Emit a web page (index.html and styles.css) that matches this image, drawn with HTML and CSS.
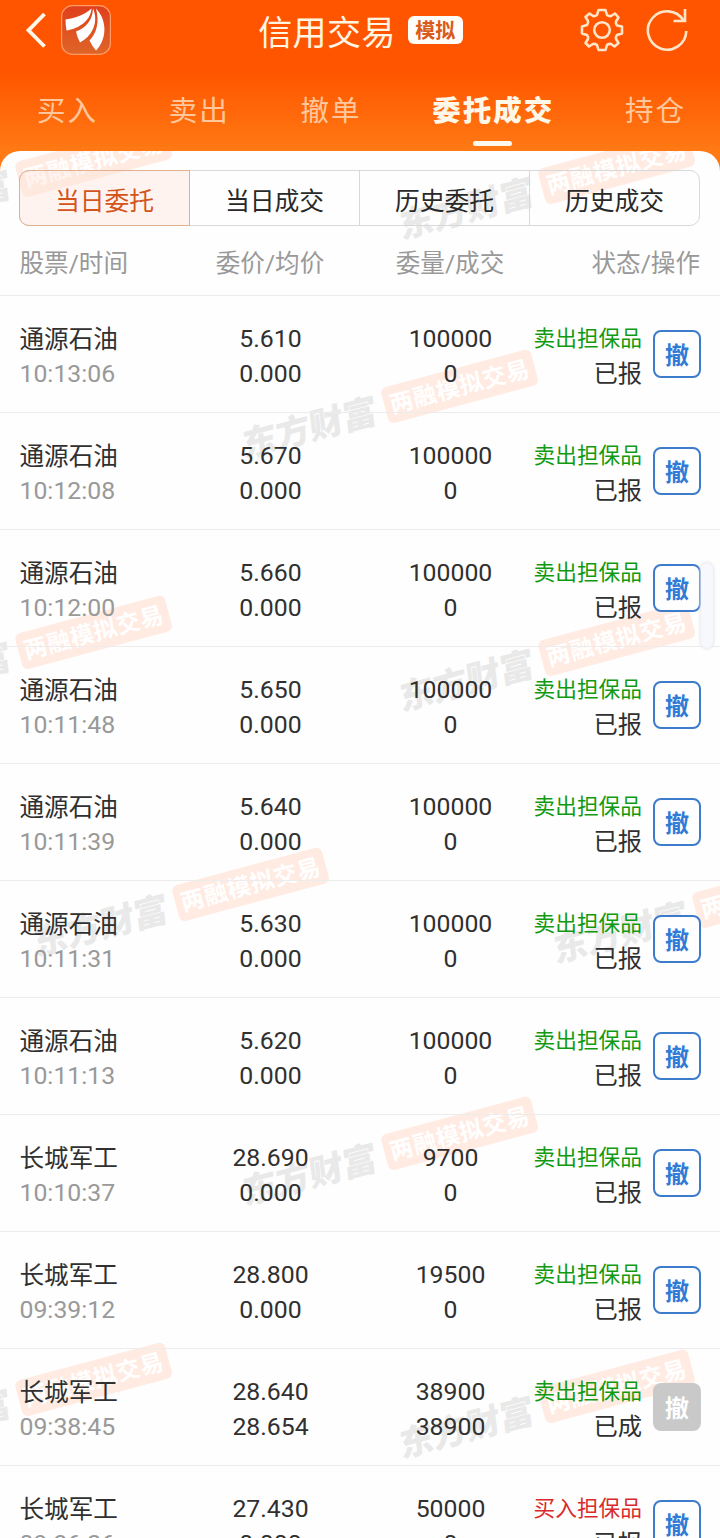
FILE: index.html
```html
<!DOCTYPE html>
<html lang="zh-CN">
<head>
<meta charset="utf-8">
<title>信用交易</title>
<link rel="stylesheet" href="styles.css">
</head>
<body>
<div class="app">
  <header class="header">
    <div class="titlebar">
      <div class="side left">
        <svg class="back" width="24" height="40" viewBox="0 0 24 40"><path d="M20.500 4 4.500 20.300 20.500 36.500" fill="none" stroke="#fff8ea" stroke-width="3.800"/></svg>
        <svg class="logo" width="50" height="50" viewBox="0 0 50 50">
          <defs><linearGradient id="lg" x1="0" y1="0" x2="0" y2="1"><stop offset="0" stop-color="#df3f1d"/><stop offset="1" stop-color="#df6527"/></linearGradient></defs>
          <rect x=".6" y=".6" width="48.800" height="48.800" rx="11" fill="url(#lg)" stroke="#ff9b63" stroke-width="1.200"/>
          <path d="M30.500 3.500C24 10 13 13.500 4.500 14.500Q4.500 20 5.500 25.500C14 24.500 29.500 18 30.500 3.500Z" fill="#fff"/>
          <path d="M32 3.500C31.500 15 25 23 15 26.500Q16 32 19 37.500C30 32 38.500 18 32 3.500Z" fill="#fff"/>
          <path d="M35 3.500C38.500 17 36 27.500 28.500 35.500Q31 41 35 45.500C45.500 35 47 16 35 3.500Z" fill="#fff"/>
        </svg>
      </div>
      <h1 class="title">信用交易</h1>
      <span class="tag">模拟</span>
      <div class="side right">
        <svg width="44" height="44" viewBox="0 0 44 44" fill="none" stroke="#ffe5c8" stroke-width="2.600" stroke-linejoin="round">
          <path d="M18.500 2H25.500L27 7Q29 8.500 31 8L35 5.500L38.500 9.500L36 13.500Q35.500 15.500 37 17.500L42 18.500V25.500L37 27Q35.500 29 36 31L38.500 35L34.500 38.500L31 36Q29 35.500 27 37L25.500 42H18.500L17 37Q15 35.500 13 36L9 38.500L5.500 35L8 31Q8.500 29 7 27L2 25.500V18.500L7 17Q8.500 15 8 13L5.500 9L9.500 5.500L13 8Q15 8.500 17 7Z"/>
          <circle cx="22" cy="22" r="7.800"/>
        </svg>
        <svg width="44" height="44" viewBox="0 0 44 44" fill="none" stroke="#ffe5c8" stroke-width="2.600">
          <path d="M41.300 23A19.200 19.200 0 1 1 38.500 12.500"/><path d="M40 1V13H28.500"/>
        </svg>
      </div>
    </div>
    <nav class="tabs">
      <a class="tab">买入</a><a class="tab">卖出</a><a class="tab">撤单</a><a class="tab active">委托成交</a><a class="tab">持仓</a>
    </nav>
  </header>
  <main class="panel">
    <div class="marks">
      <div class="mark m1"><i>东方财富</i><b>两融模拟交易</b></div>
      <div class="mark m2"><i>东方财富</i><b>两融模拟交易</b></div>
      <div class="mark m3"><i>东方财富</i><b>两融模拟交易</b></div>
      <div class="mark m4"><i>东方财富</i><b>两融模拟交易</b></div>
      <div class="mark m5"><i>东方财富</i><b>两融模拟交易</b></div>
      <div class="mark m6"><i>东方财富</i><b>两融模拟交易</b></div>
      <div class="mark m7"><i>东方财富</i><b>两融模拟交易</b></div>
      <div class="mark m8"><i>东方财富</i><b>两融模拟交易</b></div>
      <div class="mark m9"><i>东方财富</i><b>两融模拟交易</b></div>
      <div class="mark m10"><i>东方财富</i><b>两融模拟交易</b></div>
    </div>
    <div class="content">
      <div class="segments"><a class="seg on">当日委托</a><a class="seg">当日成交</a><a class="seg">历史委托</a><a class="seg">历史成交</a></div>
      <div class="columns"><span>股票/时间</span><span>委价/均价</span><span>委量/成交</span><span>状态/操作</span></div>
      <div class="row"><div class="stock"><p>通源石油</p><p>10:13:06</p></div><div class="num"><p>5.610</p><p>0.000</p></div><div class="num"><p>100000</p><p>0</p></div><div class="state"><div><p class="sell">卖出担保品</p><p>已报</p></div><span class="btn">撤</span></div></div>
      <div class="row"><div class="stock"><p>通源石油</p><p>10:12:08</p></div><div class="num"><p>5.670</p><p>0.000</p></div><div class="num"><p>100000</p><p>0</p></div><div class="state"><div><p class="sell">卖出担保品</p><p>已报</p></div><span class="btn">撤</span></div></div>
      <div class="row"><div class="stock"><p>通源石油</p><p>10:12:00</p></div><div class="num"><p>5.660</p><p>0.000</p></div><div class="num"><p>100000</p><p>0</p></div><div class="state"><div><p class="sell">卖出担保品</p><p>已报</p></div><span class="btn">撤</span></div></div>
      <div class="row"><div class="stock"><p>通源石油</p><p>10:11:48</p></div><div class="num"><p>5.650</p><p>0.000</p></div><div class="num"><p>100000</p><p>0</p></div><div class="state"><div><p class="sell">卖出担保品</p><p>已报</p></div><span class="btn">撤</span></div></div>
      <div class="row"><div class="stock"><p>通源石油</p><p>10:11:39</p></div><div class="num"><p>5.640</p><p>0.000</p></div><div class="num"><p>100000</p><p>0</p></div><div class="state"><div><p class="sell">卖出担保品</p><p>已报</p></div><span class="btn">撤</span></div></div>
      <div class="row"><div class="stock"><p>通源石油</p><p>10:11:31</p></div><div class="num"><p>5.630</p><p>0.000</p></div><div class="num"><p>100000</p><p>0</p></div><div class="state"><div><p class="sell">卖出担保品</p><p>已报</p></div><span class="btn">撤</span></div></div>
      <div class="row"><div class="stock"><p>通源石油</p><p>10:11:13</p></div><div class="num"><p>5.620</p><p>0.000</p></div><div class="num"><p>100000</p><p>0</p></div><div class="state"><div><p class="sell">卖出担保品</p><p>已报</p></div><span class="btn">撤</span></div></div>
      <div class="row"><div class="stock"><p>长城军工</p><p>10:10:37</p></div><div class="num"><p>28.690</p><p>0.000</p></div><div class="num"><p>9700</p><p>0</p></div><div class="state"><div><p class="sell">卖出担保品</p><p>已报</p></div><span class="btn">撤</span></div></div>
      <div class="row"><div class="stock"><p>长城军工</p><p>09:39:12</p></div><div class="num"><p>28.800</p><p>0.000</p></div><div class="num"><p>19500</p><p>0</p></div><div class="state"><div><p class="sell">卖出担保品</p><p>已报</p></div><span class="btn">撤</span></div></div>
      <div class="row"><div class="stock"><p>长城军工</p><p>09:38:45</p></div><div class="num"><p>28.640</p><p>28.654</p></div><div class="num"><p>38900</p><p>38900</p></div><div class="state"><div><p class="sell">卖出担保品</p><p>已成</p></div><span class="btn off">撤</span></div></div>
      <div class="row"><div class="stock"><p>长城军工</p><p>09:36:26</p></div><div class="num"><p>27.430</p><p>0.000</p></div><div class="num"><p>50000</p><p>0</p></div><div class="state"><div><p class="buy">买入担保品</p><p>已报</p></div><span class="btn">撤</span></div></div>
    </div>
  </main>
  <div class="handle"></div>
</div>
</body>
</html>
```

FILE: styles.css
```css
* { box-sizing: border-box; }
body { margin: 0; font-family: Roboto, "Noto Sans CJK SC", sans-serif; color: #303030; }
p, h1 { margin: 0; }
.app { position: relative; width: 720px; height: 1538px; overflow: hidden; background: linear-gradient(#ff5500 0, #ff5500 72px, #ff7a14 152px, #ff7a14 190px); }
.header { height: 151px; }
.titlebar { height: 60px; display: flex; align-items: center; justify-content: center; padding: 0 31px 0 24px; }
.side { flex: 1 1 0; display: flex; align-items: center; }
.side svg { display: block; }
.left { gap: 13px; margin-right: 8px; }
.right { justify-content: flex-end; gap: 21px; }
.title { font-size: 34px; line-height: 62px; font-weight: 400; color: #fff5e0; letter-spacing: .4px; padding-top: 6px; }
.tag { width: 55px; height: 28px; margin-left: 12px; border-radius: 6px; background: #fffdf8; color: #d95b1b; font-size: 20px; line-height: 30px; font-weight: 700; text-align: center; }
.tabs { height: 91px; display: flex; justify-content: space-between; padding: 33px 34px 0 37px; }
.tab { position: relative; height: 56px; font-size: 28.500px; line-height: 38px; letter-spacing: 2px; color: #ffc79b; }
.active { color: #fff8e8; font-weight: 900; }
.active::after { content: ""; position: absolute; left: 41px; top: 48px; width: 39px; height: 5px; border-radius: 3px; background: #fff8ec; }
.panel { position: relative; height: 1387px; border-radius: 20px 20px 0 0; background: #fefefe; overflow: hidden; }
.content { position: relative; padding-top: 19px; }

/* Watermark stamps scattered behind the list */
.marks { position: absolute; inset: 0; }
.mark { position: absolute; width: 310px; height: 36px; display: flex; align-items: center; justify-content: space-between; transform-origin: 232px 18px; transform: rotate(-15deg); white-space: nowrap; }
.mark i { margin-left: 8px; padding-top: 3px; font-size: 34.500px; line-height: 36px; font-weight: 900; font-style: normal; color: #e9e9e9; transform: skewX(-8deg); }
.mark b { width: 155px; height: 37px; border-radius: 6px; background: #ffebe2; color: #fff; font-size: 23.500px; line-height: 38px; font-weight: 700; letter-spacing: .5px; text-align: center; }
.m1 { left: -139px; top: -9px; }
.m2 { left: 384px; top: -2px; }
.m3 { left: 227px; top: 217px; }
.m4 { left: -139px; top: 463px; }
.m5 { left: 384px; top: 470px; }
.m6 { left: 18px; top: 715px; }
.m7 { left: 538px; top: 722px; }
.m8 { left: 227px; top: 964px; }
.m9 { left: -139px; top: 1210px; }
.m10 { left: 384px; top: 1217px; }

.segments { display: flex; width: 681px; height: 56px; margin-left: 19px; border: 1px solid #d5d9d9; border-radius: 10px; }
.seg { flex: 1; border-left: 1px solid #d5d9d9; font-size: 24.800px; line-height: 61px; text-align: center; color: #292929; }
.seg.on { margin: -1px 0 -1px -1px; border: 1px solid #e2b08e; border-radius: 10px 0 0 10px; background: rgba(255, 228, 217, .4); color: #d4551b; }
.seg.on + .seg { border-left: 0; }
.columns { height: 70px; display: grid; grid-template-columns: repeat(4, 180px); border-bottom: 1px solid #ebebeb; font-size: 24.600px; line-height: 76px; color: #999; text-align: center; }
.columns span:first-child { text-align: left; padding-left: 19.500px; }
.columns span:last-child { text-align: right; padding-right: 20px; }
.row { height: 117px; display: grid; grid-template-columns: repeat(4, 180px); padding-top: 26px; border-bottom: 1px solid #ececec; font-size: 24.600px; }
.row p { height: 35px; line-height: 35px; white-space: nowrap; }
.stock { padding-left: 19.500px; }
.stock p:last-child { color: #999; line-height: 33px; font-size: 24.800px; }
.num { padding-left: 1px; text-align: center; font-size: 24.800px; }
.row .num p { line-height: 33px; }
.state { display: flex; justify-content: flex-end; gap: 11px; padding-right: 19px; text-align: right; font-size: 24.300px; }
.row .state p { line-height: 33px; }
.state .sell, .state .buy { font-size: 21.700px; }
.sell { color: #119a11; }
.buy { color: #d92b2b; }
.btn { flex: none; width: 48px; height: 48px; margin-top: 8px; border: 2px solid #3d7ccc; border-radius: 8px; background: #fefefe; color: #307bd5; font-size: 24px; line-height: 49px; font-weight: 700; text-align: center; }
.off { border-color: #c9c9c9; background: #c9c9c9; color: #fff; }
.handle { position: absolute; left: 701px; top: 563px; width: 12px; height: 85px; border-radius: 6px; background: #f6f8fe; box-shadow: 0 0 3px 1px #e6e6ea; }
```
